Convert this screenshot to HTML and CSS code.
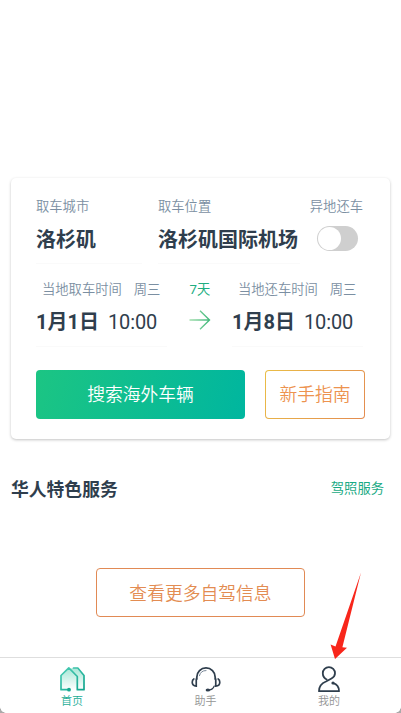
FILE: index.html
```html
<!DOCTYPE html>
<html lang="zh-CN">
<head>
<meta charset="utf-8">
<title>海外租车</title>
<link rel="stylesheet" href="styles.css">
</head>
<body>
<div class="screen">
  <main class="content">
    <section class="card">
      <div class="places">
        <div class="field city"><span class="label">取车城市</span><span class="value">洛杉矶</span></div>
        <div class="field location"><span class="label">取车位置</span><span class="value">洛杉矶国际机场</span></div>
        <div class="oneway"><span class="label">异地还车</span><span class="switch"><span class="knob"></span></span></div>
      </div>
      <div class="dates">
        <div class="field date">
          <span class="label when"><span>当地取车时间</span><span>周三</span></span>
          <span class="value"><span>1月1日</span><span class="time">10:00</span></span>
        </div>
        <div class="span-days">
          <span class="days">7天</span>
          <svg class="arrow" viewBox="0 0 22 20"><defs><linearGradient id="ag" gradientUnits="userSpaceOnUse" x1="0" y1="0" x2="22" y2="0"><stop offset="0" stop-color="#a4dfae"/><stop offset="1" stop-color="#39b577"/></linearGradient></defs><path d="M0.5 10H20.5M11 0.8L20.5 10L11 19.2" fill="none" stroke="url(#ag)" stroke-width="1.4"/></svg>
        </div>
        <div class="field date">
          <span class="label when"><span>当地还车时间</span><span>周三</span></span>
          <span class="value"><span>1月8日</span><span class="time">10:00</span></span>
        </div>
      </div>
      <div class="actions">
        <button class="btn search">搜索海外车辆</button>
        <button class="btn guide">新手指南</button>
      </div>
    </section>
    <div class="heading">
      <h2>华人特色服务</h2>
      <a class="license">驾照服务</a>
    </div>
    <button class="btn more">查看更多自驾信息</button>
  </main>
  <nav class="tabs">
    <div class="tab active">
      <svg viewBox="0 0 30 28"><defs><linearGradient id="hg" x1="0" y1="0" x2="0" y2="1"><stop offset="0" stop-color="#a8e7d7"/><stop offset="1" stop-color="#fff"/></linearGradient><linearGradient id="hs" x1="0" y1="0" x2="1" y2="1"><stop offset="0" stop-color="#4ccdb5"/><stop offset="1" stop-color="#10a58d"/></linearGradient></defs>
        <path d="M4.4 25V11L12 3.2L20 12V25Z" fill="url(#hg)"/>
        <path d="M16 3.2H20L27 11V25H20V12L13 3.5Z" fill="url(#hg)"/>
        <path d="M12 24.7H4V10.5L11.8 2.8L20.3 11.5V24.7H27V10.5L20.8 3H16.5" fill="none" stroke="url(#hs)" stroke-width="1.7" stroke-linejoin="round" stroke-linecap="round"/>
        <circle cx="12" cy="24.7" r="1.9" fill="#16a990"/></svg>
      <span>首页</span>
    </div>
    <div class="tab assistant">
      <svg viewBox="0 0 32 28"><g fill="none" stroke="#2f3e4d" stroke-linecap="round"><path d="M6.2 14V12A9.8 9.8 0 0 1 25.8 12V14" stroke-width="1.9"/><path d="M9 10.5A7 7 0 0 1 16 5" stroke-width="1" stroke="#718091"/><path d="M5.6 14V21.5C2.5 21.5 1.3 19.5 1.3 17.5C1.3 15.5 2 14.5 3 14" stroke-width="1.8"/><path d="M26.4 14V21.5C29.5 21.5 30.7 19.5 30.7 17.5C30.7 15.5 30 14.5 29 14" stroke-width="1.8"/><path d="M24.8 21.5C23.8 24.2 21.5 26 18 26" stroke-width="1.3"/></g><ellipse cx="18" cy="25.8" rx="2.4" ry="1.6" fill="#2f3e4d"/></svg>
      <span>助手</span>
    </div>
    <div class="tab">
      <svg viewBox="0 0 24 28"><path d="M16.2 18.2C19.5 19.2 22 21.8 22 26.2H2C2 20.5 5.2 18 9 16.5L14.5 13.5C16.8 12.2 18 10.5 18 8.2A6.1 6.1 0 0 0 5.8 8.2C5.8 11.5 7.8 13.6 10.2 14.8" fill="none" stroke="#2f3e4d" stroke-width="1.8" stroke-linejoin="round"/><circle cx="16" cy="18" r="1.6" fill="#2f3e4d"/></svg>
      <span>我的</span>
    </div>
  </nav>
  <svg class="pointer" viewBox="0 0 34 88"><path d="M33 1.5L14.4 76.3L19 76.8L7 88L2.6 73.5L7.5 75.6L33 1.5Z" fill="#f8261b"/></svg>
  <span class="corner left"></span>
  <span class="corner right"></span>
</div>
</body>
</html>
```
FILE: styles.css
```css
* { box-sizing: border-box; }
body { margin: 0; background: #fff; font-family: Roboto, "Noto Sans CJK SC", sans-serif; color: #2f3e4d; }
.screen { position: relative; width: 401px; height: 713px; overflow: hidden; display: flex; flex-direction: column; }
.content { flex: 1; display: flex; flex-direction: column; padding: 178px 11px 0; }
.card { height: 261px; border-radius: 5px; padding: 17px 25px 0; box-shadow: 0 1px 3px rgba(0,0,0,.24); }
.places { display: flex; height: 69px; }
.field { display: flex; flex-direction: column; white-space: nowrap; border-bottom: 1px solid #fafafa; }
.city { width: 106px; margin-right: 16px; }
.location { width: 142px; }
.label { font-size: 13.3px; line-height: 23px; color: #7b8fa2; font-weight: 350; white-space: nowrap; }
.value { font-size: 20px; line-height: 30px; margin-top: 7px; font-weight: 700; }
.oneway { flex: 1; display: flex; flex-direction: column; align-items: flex-end; padding-right: 2px; }
.switch { width: 41px; height: 25px; margin: 8px 5px 0 0; background: #cfcfcf; border-radius: 13px; padding: 1px; }
.knob { display: block; width: 23px; height: 23px; border-radius: 50%; background: #fff; }
.dates { display: flex; height: 69px; margin-top: 14px; }
.date { width: 131px; }
.when { display: flex; gap: 12px; padding-left: 6px; }
.date .value { display: flex; gap: 9px; margin-top: 6px; }
.time { font-weight: 400; letter-spacing: -.1px; }
.span-days { width: 65px; padding-left: 1px; display: flex; flex-direction: column; align-items: center; }
.days { font-size: 13.3px; line-height: 23px; color: #20ad80; font-weight: 400; }
.arrow { width: 22px; height: 20px; margin-top: 9px; }
.actions { display: flex; gap: 20px; margin-top: 23px; }
.btn { display: block; height: 49px; padding: 0; border: 0; border-radius: 4px; font-family: inherit; font-size: 17.8px; font-weight: 350; line-height: 50px; text-align: center; background: none; }
.search { width: 209px; color: #fff; background: linear-gradient(105deg, #1cc583, #00b69f); }
.guide { width: 100px; line-height: 47px; color: #ed934f; border: 1.5px solid transparent; background: linear-gradient(#fff, #fff) padding-box, linear-gradient(120deg, #eabe46, #e38b50) border-box; }
.heading { display: flex; justify-content: space-between; align-items: center; height: 30px; margin-top: 35px; padding-right: 6px; }
.heading h2 { margin: 0; font-size: 17.8px; line-height: 31px; font-weight: 700; }
.license { font-size: 13.3px; line-height: 22px; color: #18aa84; }
.more { width: 209px; margin: 64px 0 0 85px; line-height: 49px; color: #e38c52; border: 1px solid #e18a55; }
.tabs { height: 56px; border-top: 1px solid #dedede; display: flex; justify-content: space-between; padding: 7px 57px 0 57px; }
.tab { display: flex; flex-direction: column; align-items: center; width: 30px; color: #949494; font-size: 11px; line-height: 17px; font-weight: 350; }
.tab svg { width: 30px; height: 28px; flex: none; }
.tab.active { color: #23ad96; }
.assistant { margin-left: 10px; }
.pointer { position: absolute; left: 328px; top: 571px; width: 34px; height: 88px; }
.corner { position: absolute; bottom: 0; width: 6px; height: 6px; }
.left { left: 0; background: radial-gradient(circle at 100% 0, transparent 5.5px, #aaa 6px); }
.right { right: 0; background: radial-gradient(circle at 0 0, transparent 5.5px, #aaa 6px); }
```
